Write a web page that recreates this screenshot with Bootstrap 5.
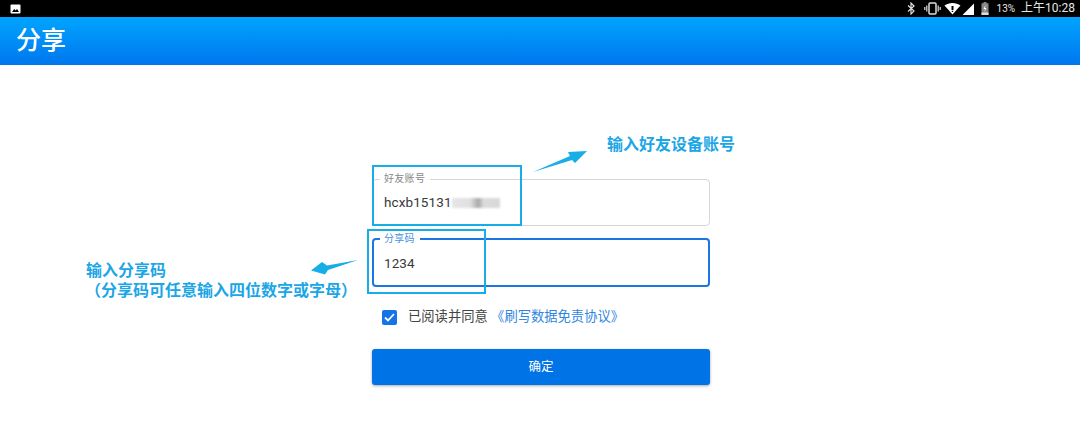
<!DOCTYPE html>
<html lang="zh-CN">
<head>
  <meta charset="UTF-8" />
  <meta name="viewport" content="width=device-width, initial-scale=1.0"/>
  <title>分享</title>
  <link href="https://cdn.jsdelivr.net/npm/bootstrap@5.3.0/dist/css/bootstrap.min.css" rel="stylesheet"/>
  <style>
    html, body { height: 427px; overflow: hidden; }
    body {
      position: relative;
      background: #fff;
      font-family: Roboto, "Noto Sans CJK SC", sans-serif;
      color: #333;
    }
    .status-strip { height: 17px; background: #000; color: #e6e6e6; font-size: 12px; line-height: 17px; padding: 0 5px 0 10px; }
    .status-icons { gap: 5px; }
    .status-pct { font-size: 10px; margin: 0 1px 0 3px; }
    .app-head {
      height: 48px;
      padding-left: 16px;
      background: linear-gradient(180deg, #00a4ff 0%, #0077ee 100%);
      color: #fff;
      font-size: 25px;
      font-weight: 500;
      line-height: 47px;
    }
    .share-form { width: 338px; margin: 107px auto 0 372px; }
    .float-field {
      height: 54px;
      margin: 0;
      padding: 0 7px;
      border: 1px solid #d6d6d6;
      border-radius: 4px;
    }
    .float-field legend {
      float: none;
      width: auto;
      margin: 0;
      padding: 0 5px 0 4px;
      font-size: 10px;
      line-height: 14px;
      color: #888;
      letter-spacing: .3px;
    }
    .float-value { font-size: 13.5px; line-height: 20px; padding: 6px 0 0 4px; color: #3a3a3a; letter-spacing: .1px; }
    .float-field.is-active { height: 55px; margin-top: 6px; border: 2px solid #1976e2; padding: 0 6px; }
    .float-field.is-active legend { color: #4a90e2; }
    .float-field.is-active .float-value { padding-top: 7px; }
    .masked { display: inline-block; width: 48px; height: 10px; vertical-align: -1px; background: linear-gradient(90deg, #e6e6e6 0%, #e0e0e0 38%, #a8a8a8 55%, #dcdcdc 66%, #d8d8d8 100%); filter: blur(1px); }
    .agree-row { margin: 22px 0 0 10px; font-size: 13.3px; line-height: 16px; color: #444; }
    .agree-box { width: 15px; height: 15px; border-radius: 2px; background: #1473e6; }
    .agree-copy { margin-left: 3px; }
    .agree-row a { color: #2f86e0; text-decoration: none; }
    .confirm-btn {
      display: block;
      width: 100%;
      height: 36px;
      margin-top: 24px;
      padding: 0;
      border: 0;
      border-radius: 3px;
      background: #0073e6;
      color: #fff;
      font-size: 12.5px;
      box-shadow: 0 1px 3px rgba(0,0,0,.35);
    }
    /* annotations drawn over the screenshot */
    .mark-box { position: absolute; border: 2px solid #17aee8; }
    .mark-one { left: 372px; top: 165px; width: 150px; height: 61px; }
    .mark-two { left: 367px; top: 229px; width: 119px; height: 65px; }
    .mark-text { position: absolute; color: #1ba6e6; font-weight: 700; font-size: 16px; line-height: 20px; white-space: nowrap; }
    .mark-text-one { left: 607px; top: 135px; }
    .mark-text-two { left: 86px; top: 261px; }
    .mark-indent { display: inline-block; margin-left: -1px; }
    .mark-arrow { position: absolute; left: 0; top: 0; }
  </style>
</head>
<body>
  <div class="status-strip d-flex align-items-center justify-content-between">
    <svg width="11" height="10" viewBox="0 0 11 10"><rect x=".5" y=".5" width="10" height="9" rx="1" fill="#fff"/><path d="M2 8l2.2-3 1.4 1.6L7 5l2 3z" fill="#000"/></svg>
    <div class="status-icons d-flex align-items-center">
      <svg width="8" height="13" viewBox="0 0 8 13"><path d="M1 3.500l6 5.500L4 12V1l3 3L1 9.500" fill="none" stroke="#ddd" stroke-width="1.200"/></svg>
      <svg width="17" height="13" viewBox="0 0 17 13" style="margin-left:4px"><rect x="5" y="1" width="7" height="11" rx="1" fill="none" stroke="#ddd" stroke-width="1.500"/><path d="M2.800 3.500v6M.8 5v3M14.200 3.500v6M16.200 5v3" stroke="#ddd" stroke-width="1.200"/></svg>
      <svg width="17" height="13" viewBox="0 0 17 13" style="margin-left:-2px"><path d="M.5 3.500C4.800 0 12.200 0 16.500 3.500L8.500 12.500z" fill="#fff"/><path d="M7.500 4h2v4h-2z" fill="#000"/><path d="M7.800 8.800h1.400v1.200H7.800z" fill="#000"/></svg>
      <svg width="12" height="12" viewBox="0 0 12 12" style="margin-left:-4px"><path d="M12 .5V12H.5z" fill="#fff"/></svg>
      <svg width="8" height="13" viewBox="0 0 8 13" style="margin-left:2px"><path d="M2.500 0h3v1.200H7.500V13H.5V1.200h2z" fill="#888"/><path d="M.5 10.500h7V13h-7z" fill="#ddd"/><path d="M4.500 3L2.500 7H4l-.5 3 2-4H4z" fill="#fff"/></svg>
      <span class="status-pct">13%</span>
      <span>上午10:28</span>
    </div>
  </div>
  <div class="app-head">分享</div>

  <form class="share-form">
    <fieldset class="float-field">
      <legend>好友账号</legend>
      <div class="float-value">hcxb15131<span class="masked"></span></div>
    </fieldset>
    <fieldset class="float-field is-active">
      <legend>分享码</legend>
      <div class="float-value">1234</div>
    </fieldset>
    <div class="agree-row d-flex align-items-center gap-2">
      <span class="agree-box d-flex align-items-center justify-content-center">
        <svg width="11" height="9" viewBox="0 0 11 9"><path d="M1 4.500L4 7.500 10 1" fill="none" stroke="#fff" stroke-width="1.800"/></svg>
      </span>
      <span class="agree-copy">已阅读并同意 <a href="#">《刷写数据免责协议》</a></span>
    </div>
    <button type="button" class="confirm-btn">确定</button>
  </form>

  <div class="mark-box mark-one"></div>
  <div class="mark-box mark-two"></div>
  <div class="mark-text mark-text-one">输入好友设备账号</div>
  <div class="mark-text mark-text-two">输入分享码<br><span class="mark-indent">（分享码可任意输入四位数字或字母）</span></div>
  <svg class="mark-arrow" width="1080" height="427" viewBox="0 0 1080 427">
    <path d="M533 172L570 156 568 152 587 151 575 163 572 160z" fill="#17aee8"/>
    <path d="M358 260L327 265.500 322 262 311 270.500 325 274.500 328 270z" fill="#17aee8"/>
  </svg>
  <script src="https://cdn.jsdelivr.net/npm/bootstrap@5.3.0/dist/js/bootstrap.bundle.min.js"></script>
</body>
</html>
